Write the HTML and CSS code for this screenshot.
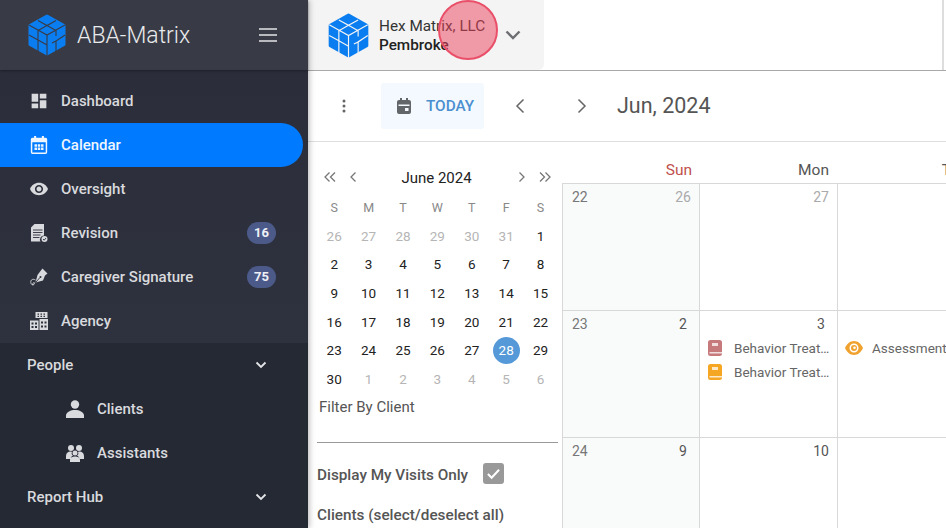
FILE: index.html
```html
<!DOCTYPE html>
<html lang="en">
<head>
  <meta charset="UTF-8" />
  <title>ABA-Matrix Calendar</title>
  <link rel="stylesheet" href="styles.css">
</head>
<body>

  <svg class="defs" width="0" height="0">
    <symbol id="cubo" viewBox="0 0 38 42">
      <path d="M19 2 36 11.500V30.500L19 40 2 30.500V11.500Z" fill="#0a7df0" stroke="#0a7df0" stroke-width="3" stroke-linejoin="round"/>
      <path d="M10 6.500 19 11.500 28 6.500M1 11 19 21 37 11M19 11.500 10 16.500M19 11.500 28 16.500M19 21V42M10 16.500V26M1 21 10 26 19 31M10 26V38M28 16.500V22M37 21 28 27V38M28 27 24 29" fill="none" stroke="currentColor" stroke-width="1.100"/>
    </symbol>
    <symbol id="libro" viewBox="0 0 14 16">
      <path d="M2.500 0H11.500A2.500 2.500 0 0 1 14 2.500V13.500A2.500 2.500 0 0 1 11.500 16H2.500A2.500 2.500 0 0 1 0 13.500V2.500A2.500 2.500 0 0 1 2.500 0Z" fill="currentColor"/>
      <path d="M4 3H10V6H4ZM1.500 12H14V13.500H1.500Z" fill="#fff" opacity=".75"/>
    </symbol>
  </svg>

  <div class="app">

    <!-- Menu lateral -->
    <aside class="sidebar">
      <div class="brand">
        <svg class="brand-logo"><use href="#cubo" color="#383b46"/></svg>
        <span class="brand-name">ABA-Matrix</span>
        <svg class="burger" viewBox="0 0 18 14"><path d="M0 1H18M0 7H18M0 13H18" stroke="#e4e5e8" stroke-width="1.500" fill="none"/></svg>
      </div>

      <nav class="menu">
        <a class="item">
          <svg class="icon" viewBox="1 1 22 22"><path d="M3 13h8V3H3v10zm0 8h8v-6H3v6zm10 0h8V11h-8v10zm0-18v6h8V3h-8z"/></svg>
          Dashboard
        </a>
        <a class="item active">
          <svg class="icon" viewBox="2 1 20 22"><path fill-rule="evenodd" d="M6 1h2.500v2h7V1H18v2h2a2 2 0 0 1 2 2v16a2 2 0 0 1-2 2H4a2 2 0 0 1-2-2V5a2 2 0 0 1 2-2h2zM3.800 8.500V21.200h16.400V8.500z"/><path d="M6.500 11h3v3h-3zM10.500 11h3v3h-3zM14.500 11h3v3h-3zM6.500 15h3v3h-3zM10.500 15h3v3h-3zM14.500 15h3v3h-3z"/></svg>
          Calendar
        </a>
        <a class="item">
          <svg class="icon" viewBox="1 1 22 22"><path d="M12 4.500C7 4.500 2.730 7.610 1 12c1.730 4.390 6 7.500 11 7.500s9.270-3.110 11-7.500c-1.730-4.390-6-7.500-11-7.500zM12 17c-2.760 0-5-2.240-5-5s2.240-5 5-5 5 2.240 5 5-2.240 5-5 5zm0-8c-1.660 0-3 1.340-3 3s1.340 3 3 3 3-1.340 3-3-1.340-3-3-3z"/></svg>
          Oversight
        </a>
        <a class="item">
          <svg class="icon" viewBox="0 0 18 18">
            <path d="M4.500 0H14V11.500A4 4 0 0 0 10.500 17.500H1V3.500Z"/>
            <path class="linea" d="M3 6H12.500M3 8.500H12.500M3 11H10.500M3 13.500H9.500"/>
            <circle cx="14.500" cy="15" r="3"/>
            <path class="linea" d="M13 15 14.200 16.200 16 14"/>
          </svg>
          Revision
          <span class="badge">16</span>
        </a>
        <a class="item">
          <svg class="icon" viewBox="0 0 18 18">
            <path d="M12.500 0.500 17.500 5.500 15 7.500 13 12.500 5.500 14.500 7.500 7 10.500 3Z"/>
            <path class="linea" d="M6 14 10 9.500"/>
            <circle class="hueco" cx="10.500" cy="9" r="1"/>
            <path d="M5.500 12C3 10.500.5 11.500.8 14.500 1.200 17.500 4 17.500 4.500 15.500 4.800 14 3 14 2.500 17" fill="none" stroke="currentColor" stroke-width=".9"/>
          </svg>
          Caregiver Signature
          <span class="badge">75</span>
        </a>
        <a class="item">
          <svg class="icon" viewBox="0 0 18 18">
            <path fill-rule="evenodd" d="M5.500 0H17.500V6H5.500ZM7.500 1.500V2.800H9V1.500ZM10.500 1.500V2.800H12V1.500ZM13.500 1.500V2.800H15V1.500ZM7.500 3.800V5H9V3.800ZM10.500 3.800V5H12V3.800ZM13.500 3.800V5H15V3.800Z"/>
            <path fill-rule="evenodd" d="M0 8.500H8.500V18H0ZM1.500 10.500V12.500H3.500V10.500ZM5 10.500V12.500H7V10.500ZM1.500 14V16H3.500V14ZM5 14V16H7V14Z"/>
            <path fill-rule="evenodd" d="M9.500 7H18V18H9.500ZM11 9.500V11.500H13V9.500ZM14.500 9.500V11.500H16.500V9.500ZM11 13.500V15.500H13V13.500ZM14.500 13.500V15.500H16.500V13.500Z"/>
          </svg>
          Agency
        </a>
      </nav>

      <div class="menu-dark">
        <a class="group">
          People
          <svg class="chevron" viewBox="0 0 12 8"><path d="M1.500 1.500 6 6l4.500-4.500"/></svg>
        </a>
        <a class="sub">
          <svg class="icon" viewBox="0 0 18 18"><circle cx="9" cy="4.500" r="4.200"/><path d="M0 18v-2.500C0 12 5 10 9 10s9 2 9 5.500V18z"/></svg>
          Clients
        </a>
        <a class="sub">
          <svg class="icon" viewBox="0 0 18 18"><circle cx="5" cy="4" r="3"/><circle cx="13" cy="4" r="3"/><circle cx="9" cy="9" r="2.500"/><path d="M0 15v-3c0-3 2-4.500 4.500-4.500 1 0 1.500.5 1.500.5-1 2 0 3 1 3.500-1.500 1-2.500 2-2.500 3.500zM18 15v-3c0-3-2-4.500-4.500-4.500-1 0-1.500.5-1.500.5 1 2 0 3-1 3.500 1.500 1 2.500 2 2.500 3.500zM4 18v-2c0-2.500 2.500-3.500 5-3.500s5 1 5 3.500v2z"/></svg>
          Assistants
        </a>
        <a class="group">
          Report Hub
          <svg class="chevron" viewBox="0 0 12 8"><path d="M1.500 1.500 6 6l4.500-4.500"/></svg>
        </a>
      </div>
    </aside>

    <main class="main">

      <!-- Barra superior -->
      <header class="topbar">
        <div class="topbar-fila">
          <div class="empresa">
            <svg class="empresa-logo"><use href="#cubo" color="#f4f4f4"/></svg>
            <div class="empresa-texto">
              <div>Hex Matrix, LLC</div>
              <strong>Pembroke</strong>
            </div>
            <svg class="empresa-flecha" viewBox="0 0 16 10"><path d="M1.500 1.500 8 8l6.500-6.500"/></svg>
          </div>
        </div>
        <span class="click-mark"></span>
      </header>

      <!-- Herramientas -->
      <div class="toolbar">
        <svg class="dots" viewBox="0 0 4 14"><circle cx="2" cy="2" r="1.500"/><circle cx="2" cy="7" r="1.500"/><circle cx="2" cy="12" r="1.500"/></svg>
        <button class="today">
          <svg viewBox="0 0 14 16"><path fill-rule="evenodd" d="M3 0h2v2h4V0h2v2h1a2 2 0 0 1 2 2v10a2 2 0 0 1-2 2H2a2 2 0 0 1-2-2V4a2 2 0 0 1 2-2h1zM1.500 6.500V8h11V6.500zM8 10v3h3.500v-3z"/></svg>
          TODAY
        </button>
        <svg class="flecha prev" viewBox="0 0 10 16"><path d="M8.500 1.500 2 8l6.500 6.500"/></svg>
        <svg class="flecha next" viewBox="0 0 10 16"><path d="M1.500 1.500 8 8l-6.500 6.500"/></svg>
        <span class="mes">Jun, 2024</span>
      </div>

      <div class="contenido">

        <!-- Panel izquierdo -->
        <section class="panel">
          <div class="mini-nav">
            <svg viewBox="0 0 14 12"><path d="M6.500 1.500 2 6l4.500 4.500M12 1.500 7.500 6l4.500 4.500"/></svg>
            <svg class="uno" viewBox="0 0 8 12"><path d="M6.500 1.500 2 6l4.500 4.500"/></svg>
            <span class="mini-titulo">June 2024</span>
            <svg class="uno" viewBox="0 0 8 12"><path d="M1.500 1.500 6 6l-4.500 4.500"/></svg>
            <svg viewBox="0 0 14 12"><path d="M2 1.500 6.500 6 2 10.500M7.500 1.500 12 6l-4.500 4.500"/></svg>
          </div>
          <div class="mini-cal" id="miniCal"></div>

          <label class="filtro-label">Filter By Client</label>
          <div class="filtro-linea"></div>
          <div class="mis-visitas">
            <span class="mis-visitas-texto">Display My Visits Only</span>
            <span class="check"><svg viewBox="0 0 16 14"><path d="M2 7.500 6 11.500 14 3"/></svg></span>
          </div>
          <div class="clientes-titulo">Clients (select/deselect all)</div>
        </section>

        <!-- Calendario -->
        <section class="calendario">
          <div class="dias">
            <div class="domingo">Sun</div>
            <div>Mon</div>
            <div>Tue</div>
          </div>
          <div class="semanas">
            <div class="celda domingo-celda"><span class="semana">22</span><span class="fecha gris">26</span></div>
            <div class="celda"><span class="fecha gris">27</span></div>
            <div class="celda"></div>

            <div class="celda domingo-celda"><span class="semana">23</span><span class="fecha">2</span></div>
            <div class="celda">
              <span class="fecha">3</span>
              <div class="eventos">
                <div class="evento"><svg class="ev-icon rosa"><use href="#libro"/></svg><span>Behavior Treatment</span></div>
                <div class="evento"><svg class="ev-icon naranja"><use href="#libro"/></svg><span>Behavior Treatment</span></div>
              </div>
            </div>
            <div class="celda">
              <div class="eventos sin-fecha">
                <div class="evento ancho">
                  <svg class="ev-ojo" viewBox="0 0 18 14"><path fill-rule="evenodd" d="M9 0C5 0 1.800 2.800 0 7c1.800 4.200 5 7 9 7s7.200-2.800 9-7c-1.800-4.200-5-7-9-7zM9 2.500a4.500 4.500 0 1 1 0 9 4.500 4.500 0 0 1 0-9z"/><path fill-rule="evenodd" d="M9 4a3 3 0 1 1 0 6 3 3 0 0 1 0-6zM9.500 5.500a1.300 1.300 0 1 0 0 2.600 1.300 1.300 0 0 0 0-2.600z"/></svg>
                  <span>Assessment</span>
                </div>
              </div>
            </div>

            <div class="celda domingo-celda"><span class="semana">24</span><span class="fecha">9</span></div>
            <div class="celda"><span class="fecha">10</span></div>
            <div class="celda"></div>
          </div>
        </section>
      </div>
    </main>
  </div>

  <script src="app.js"></script>
</body>
</html>
```

FILE: styles.css
```css
* {
  box-sizing: border-box;
}

body {
  margin: 0;
  font-family: "Roboto", "Liberation Sans", sans-serif;
  background-color: #fff;
}

.defs {
  position: absolute;
}

.app {
  display: flex;
  height: 528px;
  overflow: hidden;
}

/* Menu lateral */
.sidebar {
  width: 308px;
  flex-shrink: 0;
  background-color: #252934;
  position: relative;
  z-index: 2;
  box-shadow: 1px 0 6px rgba(0,0,0,0.3);
}

.brand {
  height: 70px;
  display: flex;
  align-items: center;
  padding: 0 31px 0 28px;
  background-color: #383b46;
  box-shadow: 0 1px 2px rgba(0,0,0,0.35);
  position: relative;
}

.brand-logo {
  width: 38px;
  height: 42px;
}

.brand-name {
  margin-left: 11px;
  font-size: 23px;
  font-weight: 300;
  color: #e9eaec;
}

.burger {
  width: 18px;
  height: 14px;
  margin-left: auto;
}

.menu {
  padding-top: 9px;
  background: linear-gradient(#2b2e3a, #2e323e);
}

.item, .group, .sub {
  display: flex;
  align-items: center;
  height: 44px;
  font-size: 15px;
  font-weight: 500;
  color: #d9dade;
}

.item {
  padding: 0 32px 0 30px;
  margin-right: 5px;
}

.item .icon {
  margin-right: 13px;
}

.icon {
  width: 18px;
  height: 18px;
  fill: currentColor;
  flex-shrink: 0;
}

.icon .linea {
  fill: none;
  stroke: #2c303b;
  stroke-width: 0.900;
}

.icon .hueco {
  fill: #2c303b;
}

.item.active {
  background-color: #007bff;
  color: #f0f6ff;
  border-radius: 0 22px 22px 0;
}

.badge {
  margin-left: auto;
  margin-right: -5px;
  width: 29px;
  height: 22px;
  line-height: 22px;
  border-radius: 11px;
  text-align: center;
  font-size: 13px;
  font-weight: 700;
  color: #eef0f6;
  background-color: #4c5a8a;
}

.group {
  padding: 0 41px 0 27px;
  justify-content: space-between;
}

.chevron {
  width: 12px;
  height: 8px;
  fill: none;
  stroke: #e4e5e8;
  stroke-width: 1.800;
}

.sub {
  padding-left: 66px;
}

.sub .icon {
  margin-right: 13px;
}

/* Parte principal */
.main {
  flex: 1;
  min-width: 0;
}

.topbar {
  height: 71px;
  border-bottom: 1px solid #a9a9a9;
  position: relative;
}

.topbar-fila {
  height: 70px;
  margin-right: 2px;
  border-right: 2px solid #ddd;
}

.empresa {
  width: 236px;
  height: 70px;
  display: flex;
  align-items: center;
  padding-left: 20px;
  background-color: #f4f4f4;
  border-radius: 0 0 6px 0;
}

.empresa-logo {
  width: 41px;
  height: 45px;
  flex-shrink: 0;
}

.empresa-texto {
  width: 108px;
  margin: 2px 0 0 10px;
  font-size: 15.300px;
  line-height: 19px;
  color: #333;
  white-space: nowrap;
}

.empresa-texto strong {
  font-weight: 500;
  color: #222;
}

.empresa-flecha {
  width: 16px;
  height: 10px;
  margin-left: 18px;
  fill: none;
  stroke: #6d6f73;
  stroke-width: 2.400;
}

.click-mark {
  position: absolute;
  left: 130px;
  top: 0;
  width: 60px;
  height: 60px;
  border-radius: 50%;
  background-color: rgba(236,64,90,0.5);
  border: 2px solid #ea4f69;
}

.toolbar {
  height: 71px;
  display: flex;
  align-items: center;
  padding-left: 34px;
  border-bottom: 1px solid #dfdfdf;
}

.dots {
  width: 4px;
  height: 14px;
  fill: #666;
}

.today {
  margin-left: 35px;
  width: 103px;
  height: 46px;
  display: flex;
  align-items: center;
  gap: 15px;
  padding: 0 0 0 16px;
  border: none;
  border-radius: 3px;
  background-color: #f3f9fe;
  color: #4a8fd0;
  font-family: inherit;
  font-size: 15.300px;
  font-weight: 500;
}

.today svg {
  width: 14px;
  height: 16px;
  fill: #636669;
}

.flecha {
  width: 10px;
  height: 16px;
  fill: none;
  stroke: #666;
  stroke-width: 1.500;
}

.flecha.prev {
  margin-left: 31px;
}

.flecha.next {
  margin-left: 52px;
}

.mes {
  margin: -2px 0 0 30px;
  font-size: 21.500px;
  color: #555;
}

.contenido {
  display: flex;
}

/* Panel izquierdo */
.panel {
  width: 254px;
  flex-shrink: 0;
  padding: 21px 4px 0 9px;
}

.mini-nav {
  height: 28px;
  display: flex;
  align-items: center;
  padding: 0 6px;
  gap: 12px;
}

.mini-nav svg {
  width: 14px;
  height: 12px;
  fill: none;
  stroke: #777;
  stroke-width: 1.300;
}

.mini-nav svg.uno {
  width: 8px;
}

.mini-titulo {
  flex: 1;
  padding: 1px 2px 0 0;
  text-align: center;
  font-size: 15px;
  color: #222;
}

.mini-cal {
  display: grid;
  grid-template-columns: repeat(7, 34.400px);
  grid-template-rows: 27.300px;
  grid-auto-rows: 28.670px;
  margin-top: 3px;
  font-size: 13.500px;
  color: #222;
}

.mini-cal span {
  display: flex;
  align-items: center;
  justify-content: center;
}

.mini-cal .dia-semana {
  color: #888;
  font-size: 12.500px;
}

.mini-cal .fuera {
  color: #b5b5b5;
}

.mini-cal .hoy {
  color: #fff;
  position: relative;
  z-index: 0;
}

.mini-cal .hoy::before {
  content: "";
  position: absolute;
  left: 50%;
  top: 50%;
  width: 27px;
  height: 27px;
  margin: -13.500px 0 0 -13.500px;
  border-radius: 50%;
  background-color: #5599d8;
  z-index: -1;
}

.filtro-label {
  display: block;
  height: 28px;
  line-height: 28px;
  padding-left: 2px;
  font-size: 15px;
  color: #555;
}

.filtro-linea {
  margin-top: 21px;
  height: 1px;
  background-color: #999;
}

.mis-visitas {
  display: flex;
  align-items: center;
  gap: 15px;
  margin-top: 20px;
  font-size: 15.300px;
  font-weight: 500;
  color: #555;
}

.mis-visitas-texto {
  padding-top: 3px;
}

.check {
  width: 21px;
  height: 21px;
  border-radius: 3px;
  background-color: #999;
  display: flex;
  align-items: center;
  justify-content: center;
}

.check svg {
  width: 15px;
  height: 13px;
  fill: none;
  stroke: #fff;
  stroke-width: 2.200;
}

.clientes-titulo {
  margin-top: 22px;
  font-size: 15.300px;
  font-weight: 500;
  color: #555;
}

/* Calendario */
.calendario {
  flex: 1;
  min-width: 0;
  overflow: hidden;
}

.dias {
  display: grid;
  grid-template-columns: 137px 138px 138px;
  height: 41px;
  align-items: end;
  padding-bottom: 4px;
  font-size: 15.500px;
  color: #555;
  text-align: right;
}

.dias div {
  padding-right: 8px;
}

.dias .domingo {
  padding-right: 7px;
  color: #c0504d;
}

.semanas {
  display: grid;
  grid-template-columns: 137px 138px 138px;
  grid-auto-rows: 127px;
}

.celda {
  border-left: 1px solid #d8d8d8;
  border-top: 1px solid #d8d8d8;
  padding: 5px 4px 0 9px;
  font-size: 14px;
  text-align: right;
  color: #555;
}

.domingo-celda {
  background-color: #f9fbfb;
  display: flex;
  justify-content: space-between;
}

.semana {
  color: #777;
}

.fecha {
  display: inline-block;
  width: 24px;
  text-align: center;
}

.gris {
  color: #aaa;
}

.eventos {
  margin-top: 4px;
  margin-left: -1px;
  text-align: left;
}

.sin-fecha {
  margin-top: 20px;
  margin-left: -2px;
}

.evento {
  display: flex;
  align-items: center;
  height: 24px;
  white-space: nowrap;
  font-size: 13.500px;
  color: #666;
}

.evento span {
  overflow: hidden;
  text-overflow: ellipsis;
}

.ev-icon {
  width: 14px;
  height: 16px;
  flex-shrink: 0;
  margin-right: 12px;
}

.rosa {
  color: #c77a7c;
}

.naranja {
  color: #f5a623;
}

.evento.ancho span {
  overflow: visible;
}

.ev-ojo {
  width: 18px;
  height: 14px;
  flex-shrink: 0;
  margin-right: 9px;
  fill: #f0a22e;
}
```

FILE: app.js
```js
const dias = ["S", "M", "T", "W", "T", "F", "S"];
const antes = [26, 27, 28, 29, 30, 31];
const despues = [1, 2, 3, 4, 5, 6];
const miniCal = document.getElementById("miniCal");

function agregar(texto, clase) {
  const el = document.createElement("span");
  el.textContent = texto;
  if (clase) el.className = clase;
  miniCal.appendChild(el);
}

dias.forEach(d => agregar(d, "dia-semana"));
antes.forEach(d => agregar(d, "fuera"));
for (let d = 1; d <= 30; d++) {
  agregar(d, d === 28 ? "hoy" : "");
}
despues.forEach(d => agregar(d, "fuera"));
```
